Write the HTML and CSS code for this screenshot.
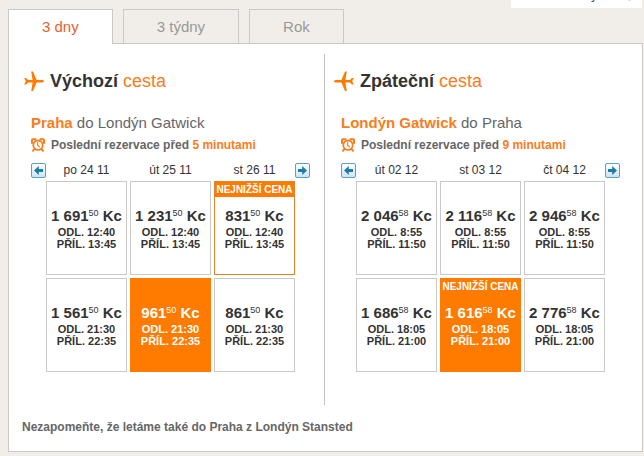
FILE: index.html
```html
<!DOCTYPE html>
<html lang="cs">
<head>
    <meta charset="UTF-8">
    <meta name="viewport" content="width=device-width, initial-scale=1.0">
    <title>Nejlevnější lety</title>
    <link rel="stylesheet" href="styles.css">
</head>
<body>
    <!-- shared icons -->
    <svg class="icon-defs" aria-hidden="true">
        <symbol id="plane" viewBox="0 0 20 20">
            <path d="M20 10.3C20 9.4 18.6 9 17 9H12.6L9 .6H7.2L8.6 9H4.2L2 7H.2L1.8 10.3L.2 13.6H2L4.2 11.6H8.6L7.2 20H9L12.6 11.6H17C18.6 11.6 20 11.2 20 10.3Z"/>
        </symbol>
        <symbol id="alarm" viewBox="0 0 14 14">
            <g fill="none" stroke="currentColor" stroke-linecap="round">
                <circle cx="7" cy="7.2" r="4.7" stroke-width="1.8"/>
                <path d="M1 5V2Q1 1.2 1.8 1.2H4.6M13 5V2Q13 1.2 12.2 1.2H9.4" stroke-width="2"/>
                <path d="M3.4 11L2 12.8M10.6 11L12 12.8" stroke-width="2"/>
                <path d="M6.6 4.6V7.2L8.4 8.8" stroke-width="1.2"/>
            </g>
        </symbol>
        <symbol id="arrow" viewBox="0 0 13 13">
            <path d="M2 6.5L6.8 2V5H11V8H6.8V11Z" fill="#1f7ba8"/>
        </symbol>
    </svg>

    <div class="top-links"><a href="#">y</a><a href="#">,</a></div>

    <div class="tabs" role="tablist">
        <button class="tab active" type="button" role="tab" aria-selected="true">3 dny</button>
        <button class="tab" type="button" role="tab" aria-selected="false">3 týdny</button>
        <button class="tab" type="button" role="tab" aria-selected="false">Rok</button>
    </div>

    <main class="panel">
        <div class="routes">
            <section class="route">
                <h2><svg class="plane"><use href="#plane"/></svg><span>Výchozí <em>cesta</em></span></h2>
                <div class="route-body">
                    <h3><strong>Praha</strong> do Londýn Gatwick</h3>
                    <p class="booking"><svg class="alarm"><use href="#alarm"/></svg><span>Poslední rezervace před <em>5 minutami</em></span></p>
                    <div class="calendar">
                        <button class="arrow" type="button" aria-label="Předchozí"><svg><use href="#arrow"/></svg></button>
                        <div class="days">
                            <span class="date">po 24 11</span>
                            <span class="date">út 25 11</span>
                            <span class="date">st 26 11</span>
                            <button class="fare" type="button"><span class="price">1 691<sup>50</sup> Kc</span><span>ODL. 12:40</span><span>PŘÍL. 13:45</span></button>
                            <button class="fare" type="button"><span class="price">1 231<sup>50</sup> Kc</span><span>ODL. 12:40</span><span>PŘÍL. 13:45</span></button>
                            <button class="fare lowest" type="button"><span class="badge">NEJNIŽŠÍ CENA</span><span class="price">831<sup>50</sup> Kc</span><span>ODL. 12:40</span><span>PŘÍL. 13:45</span></button>
                            <button class="fare" type="button"><span class="price">1 561<sup>50</sup> Kc</span><span>ODL. 21:30</span><span>PŘÍL. 22:35</span></button>
                            <button class="fare selected" type="button"><span class="price">961<sup>50</sup> Kc</span><span>ODL. 21:30</span><span>PŘÍL. 22:35</span></button>
                            <button class="fare" type="button"><span class="price">861<sup>50</sup> Kc</span><span>ODL. 21:30</span><span>PŘÍL. 22:35</span></button>
                        </div>
                        <button class="arrow next" type="button" aria-label="Další"><svg><use href="#arrow"/></svg></button>
                    </div>
                </div>
            </section>

            <section class="route">
                <h2><svg class="plane back"><use href="#plane"/></svg><span>Zpáteční <em>cesta</em></span></h2>
                <div class="route-body">
                    <h3><strong>Londýn Gatwick</strong> do Praha</h3>
                    <p class="booking"><svg class="alarm"><use href="#alarm"/></svg><span>Poslední rezervace před <em>9 minutami</em></span></p>
                    <div class="calendar">
                        <button class="arrow" type="button" aria-label="Předchozí"><svg><use href="#arrow"/></svg></button>
                        <div class="days">
                            <span class="date">út 02 12</span>
                            <span class="date">st 03 12</span>
                            <span class="date">čt 04 12</span>
                            <button class="fare" type="button"><span class="price">2 046<sup>58</sup> Kc</span><span>ODL. 8:55</span><span>PŘÍL. 11:50</span></button>
                            <button class="fare" type="button"><span class="price">2 116<sup>58</sup> Kc</span><span>ODL. 8:55</span><span>PŘÍL. 11:50</span></button>
                            <button class="fare" type="button"><span class="price">2 946<sup>58</sup> Kc</span><span>ODL. 8:55</span><span>PŘÍL. 11:50</span></button>
                            <button class="fare" type="button"><span class="price">1 686<sup>58</sup> Kc</span><span>ODL. 18:05</span><span>PŘÍL. 21:00</span></button>
                            <button class="fare lowest selected" type="button"><span class="badge">NEJNIŽŠÍ CENA</span><span class="price">1 616<sup>58</sup> Kc</span><span>ODL. 18:05</span><span>PŘÍL. 21:00</span></button>
                            <button class="fare" type="button"><span class="price">2 776<sup>58</sup> Kc</span><span>ODL. 18:05</span><span>PŘÍL. 21:00</span></button>
                        </div>
                        <button class="arrow next" type="button" aria-label="Další"><svg><use href="#arrow"/></svg></button>
                    </div>
                </div>
            </section>
        </div>
        <p class="note">Nezapomeňte, že letáme také do Praha z Londýn Stansted</p>
    </main>
</body>
</html>
```
FILE: styles.css
```css
* {
    box-sizing: border-box;
}
body {
    margin: 0;
    padding: 9px 1px 4px 8px;
    background: #f1eee9;
    color: #333;
    font-family: "Liberation Sans", Arial, sans-serif;
    font-size: 12px;
}
h2, h3, p {
    margin: 0;
}
em {
    font-style: normal;
    color: #f97d1c;
}
button {
    font-family: inherit;
    cursor: pointer;
}
.icon-defs {
    position: absolute;
    width: 0;
    height: 0;
}

/* end of the link strip above the tabs */
.top-links {
    position: absolute;
    top: 0;
    right: 2px;
    width: 131px;
    height: 8px;
    padding-right: 11px;
    background: #fff;
    overflow: hidden;
    display: flex;
    justify-content: flex-end;
    gap: 30px;
    font-size: 13px;
    line-height: 0;
}
.top-links a {
    color: #1f4f82;
    text-decoration: none;
    margin-top: -5px;
}

.tabs {
    display: flex;
    gap: 10px;
}
.tab {
    height: 34px;
    padding: 0 33px;
    border: 1px solid #c9c9c9;
    border-bottom: 0;
    background: #f1eee9;
    color: #999;
    font-size: 15px;
    line-height: 32px;
}
.tab.active {
    position: relative;
    height: 35px;
    margin-bottom: -1px;
    background: #fff;
    color: #e8612c;
}

.panel {
    padding: 10px 0 15px;
    border: 1px solid #c9c9c9;
    background: #fff;
}
.routes {
    display: flex;
}
.route {
    flex: 1 1 300px;
    padding: 15px 9px 33px;
}
.route:first-child {
    flex-basis: 299px;
    padding-left: 15px;
    padding-right: 0;
    border-right: 1px solid #c0c0c0;
}
.route h2 {
    display: flex;
    align-items: center;
    gap: 6px;
    font-size: 18px;
    line-height: 24px;
}
.route h2 em {
    font-weight: normal;
}
.plane {
    width: 20px;
    height: 20px;
    fill: #ff7b00;
}
.plane.back {
    transform: scaleX(-1);
}
.route-body {
    padding-left: 7px;
}
.route h3 {
    margin-top: 20px;
    color: #666;
    font-size: 15px;
    font-weight: normal;
    line-height: 20px;
}
.route h3 strong {
    color: #f97d1c;
}
.booking {
    display: flex;
    align-items: center;
    gap: 6px;
    margin-top: 3px;
    color: #666;
    font-weight: bold;
    line-height: 18px;
}
.alarm {
    width: 14px;
    height: 14px;
    color: #f97d1c;
}

.calendar {
    display: flex;
    align-items: flex-start;
    max-width: 279px;
    margin-top: 8px;
}
.arrow {
    flex: none;
    width: 15px;
    height: 15px;
    margin-top: 1px;
    padding: 0;
    border: 1px solid #5c9fc0;
    border-radius: 2px;
    background: linear-gradient(#fff, #cbe6f3);
}
.arrow svg {
    display: block;
    width: 13px;
    height: 13px;
}
.arrow.next svg {
    transform: scaleX(-1);
}
.days {
    flex: 1;
    display: grid;
    grid-template-columns: repeat(3, 1fr);
    gap: 3px;
}
.date {
    line-height: 16px;
    text-align: center;
}
.fare {
    position: relative;
    display: flex;
    flex-direction: column;
    align-items: center;
    height: 94px;
    padding: 24px 0 0;
    border: 1px solid #c9c9c9;
    background: #fff;
    color: #333;
    font-size: 11px;
    font-weight: bold;
    line-height: 12px;
    white-space: nowrap;
}
.price {
    font-size: 15px;
    line-height: 20px;
}
.price sup {
    font-size: 9px;
    font-weight: normal;
    line-height: 0;
    vertical-align: 5px;
}
.fare.lowest {
    border-color: #e8822a;
}
.badge {
    position: absolute;
    top: 0;
    left: 0;
    right: 0;
    background: #ff7b00;
    color: #fff;
    font-size: 10px;
    line-height: 15px;
    text-align: center;
}
.fare.selected {
    border-color: #ff7b00;
    background: #ff7b00;
    color: #fff;
}

.note {
    margin-top: 13px;
    padding: 0 13px;
    color: #666;
    font-weight: bold;
    line-height: 18px;
}
```
